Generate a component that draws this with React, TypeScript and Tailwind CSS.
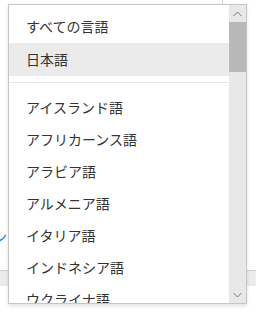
import React from "react";

const languages = [
  "アイスランド語",
  "アフリカーンス語",
  "アラビア語",
  "アルメニア語",
  "イタリア語",
  "インドネシア語",
  "ウクライナ語",
];

function Chevron({ up }: { up?: boolean }) {
  return (
    <svg width="9" height="6" viewBox="0 0 9 6" className="block">
      <path
        d={up ? "M0.5 5 L4.5 1 L8.5 5" : "M0.5 1 L4.5 5 L8.5 1"}
        fill="none"
        stroke="#777"
        strokeWidth="1"
      />
    </svg>
  );
}

export default function App() {
  return (
    <div
      className="relative h-[312px] w-[256px] overflow-hidden bg-white"
      style={{ fontFamily: '"Noto Sans CJK JP", "Noto Sans", sans-serif' }}
    >
      {/* page behind the menu */}
      <div className="absolute left-[222px] top-0 h-[60px] w-[40px] border-l border-[#d4d4d4]" />
      <span className="absolute left-[-7px] top-[226px] text-[14px] text-[#2d7be5]">ン</span>
      <div className="absolute left-0 top-[270px] h-[16px] w-full border-t border-[#d0d0d0] bg-[#ececec]" />

      {/* dropdown menu */}
      <div className="absolute left-[8px] top-[4px] flex h-[300px] w-[239px] border border-[#c6c6c6] bg-white shadow-[0_2px_4px_rgba(0,0,0,0.12)]">
        <div className="flex-1 overflow-hidden pt-[5px] text-[14px] text-[#333]">
          <div className="flex h-[33px] items-center px-[17px]">すべての言語</div>
          <div className="flex h-[33px] items-center bg-[#ebebeb] px-[17px]">日本語</div>
          <div className="mb-[8px] mt-[6px] h-px bg-[#e6e6e6]" />
          {languages.map((lang) => (
            <div key={lang} className="flex h-[32px] items-center px-[17px]">
              {lang}
            </div>
          ))}
        </div>
        <div className="flex w-[17px] flex-col bg-[#e8e8e8]">
          <div className="flex h-[17px] items-center justify-center">
            <Chevron up />
          </div>
          <div className="h-[50px] bg-[#b8b8b8]" />
          <div className="flex-1" />
          <div className="flex h-[17px] items-center justify-center">
            <Chevron />
          </div>
        </div>
      </div>
    </div>
  );
}
